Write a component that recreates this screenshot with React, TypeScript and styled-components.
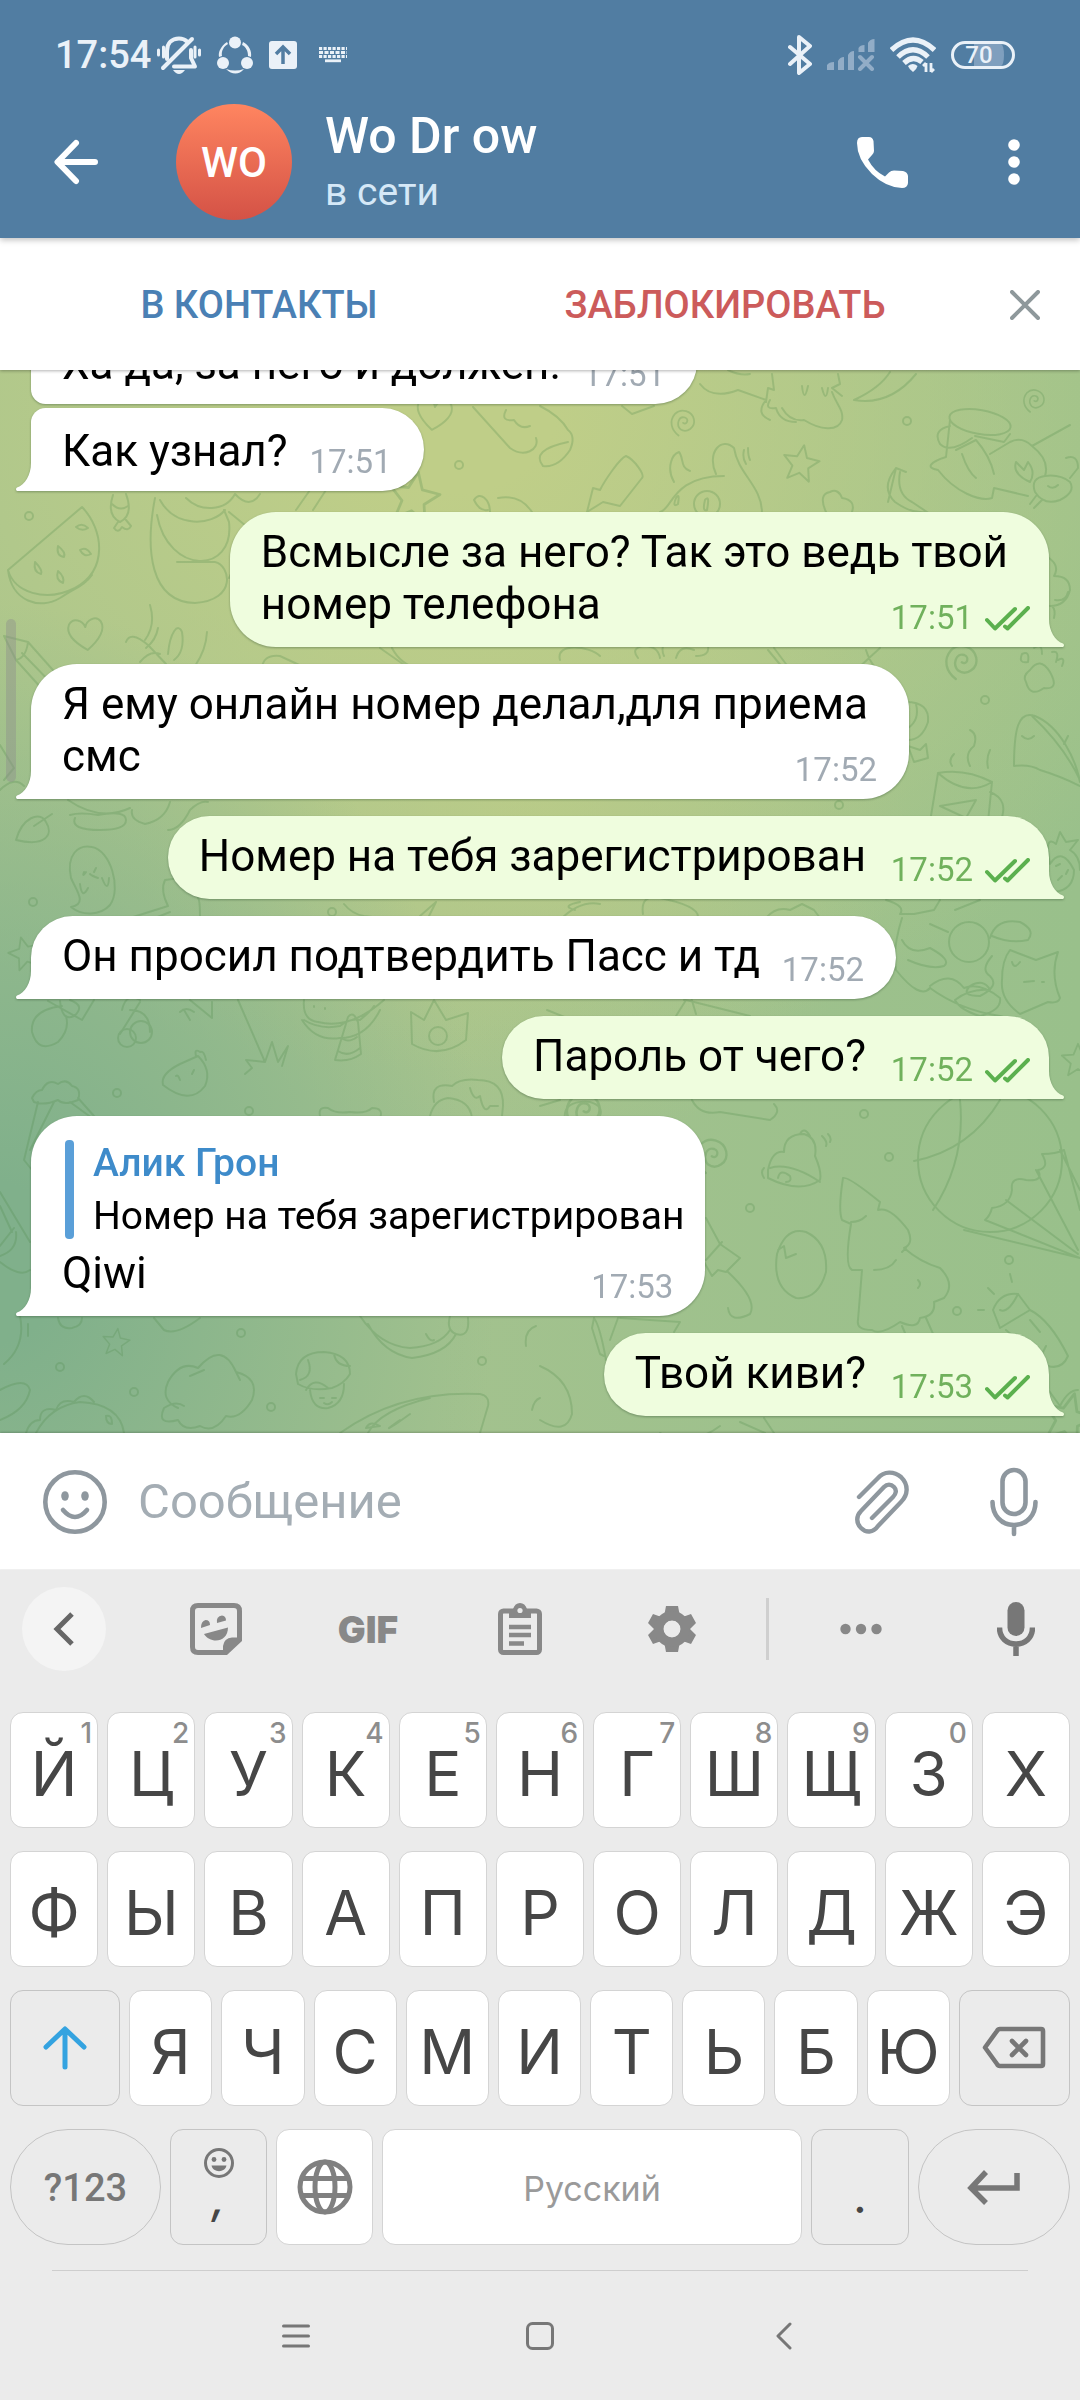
import React from "react";
import styled, { createGlobalStyle, css } from "styled-components";

const GlobalStyle = createGlobalStyle`
  *, *::before, *::after { box-sizing: border-box; }
  body { margin: 0; background: #ebebeb; font-family: Roboto, "Noto Sans", sans-serif; }
  button, input { font: inherit; border: 0; padding: 0; margin: 0; background: none; color: inherit; outline: none; }
  button { cursor: pointer; }
  p { margin: 0; }
  svg { display: block; flex: none; }
`;

const Screen = styled.div`
  display: flex;
  flex-direction: column;
  height: 100vh;
  overflow: hidden;
`;

/* ---------- header ---------- */

const Header = styled.header`
  position: relative;
  z-index: 2;
  background: #517da2;
  color: #fff;
  box-shadow: 0 2px 6px rgba(0, 0, 0, 0.25);
`;

const StatusBar = styled.div`
  display: flex;
  align-items: center;
  justify-content: space-between;
  height: 86px;
  padding: 24px 65px 0 55px;
  color: #eaf1f8;
`;

const StatusGroup = styled.div<{ $gap: number }>`
  display: flex;
  align-items: center;
  gap: ${(p) => p.$gap}px;
`;

const Clock = styled.span`
  font-size: 38px;
  font-weight: 500;
  line-height: 44px;
  margin-right: -10px;
`;

const Battery = styled.span`
  display: flex;
  align-items: center;
  justify-content: center;
  width: 64px;
  height: 28px;
  padding-right: 8px;
  border: 3px solid #eaf1f8;
  border-radius: 14px;
  background: linear-gradient(90deg, transparent 20px, #7f9fbe 20px, #7f9fbe 52px, transparent 52px) content-box;
  font-size: 24px;
  font-weight: 500;
  line-height: 22px;
`;

const ChatHeader = styled.div`
  display: flex;
  align-items: center;
  height: 152px;
`;

const IconButton = styled.button<{ $width: number; $indent?: number }>`
  display: flex;
  flex: none;
  align-items: center;
  justify-content: center;
  align-self: stretch;
  width: ${(p) => p.$width}px;
  padding-left: ${(p) => p.$indent ?? 0}px;
`;

const Avatar = styled.div`
  display: flex;
  flex: none;
  align-items: center;
  justify-content: center;
  width: 116px;
  height: 116px;
  margin: 0 33px 0 24px;
  border-radius: 50%;
  background: linear-gradient(#ff8560, #d45246);
  font-size: 42px;
  font-weight: 500;
`;

const Peer = styled.div`
  flex: 1;
  min-width: 0;
`;

const PeerName = styled.div`
  font-size: 50px;
  font-weight: 500;
  line-height: 60px;
`;

const PeerStatus = styled.div`
  font-size: 39px;
  line-height: 52px;
  color: #d5e8f7;
`;

/* ---------- contact actions ---------- */

const ActionBar = styled.div`
  position: relative;
  z-index: 1;
  display: flex;
  flex: none;
  height: 132px;
  padding: 2px 0 0 26px;
  background: #fff;
  box-shadow: 0 1px 3px rgba(0, 0, 0, 0.3);
`;

const ActionButton = styled.button<{ $danger?: boolean }>`
  flex: 1;
  font-size: 38px;
  font-weight: 500;
  color: ${(p) => (p.$danger ? "#cc5b5b" : "#4a80b4")};
`;

const CloseSlot = styled.div`
  display: flex;
  padding-left: 12px;
`;

/* ---------- chat ---------- */

const Chat = styled.main`
  position: relative;
  display: flex;
  flex: 1;
  flex-direction: column;
  justify-content: flex-end;
  gap: 17px;
  min-height: 0;
  padding: 0 31px 17px;
  overflow: hidden;
  background:
    radial-gradient(ellipse 46% 62% at 0% 84%, #80b08b 12%, rgba(128, 176, 139, 0) 100%),
    radial-gradient(ellipse 78% 62% at 42% 4%, #bfce88 12%, rgba(191, 206, 136, 0) 100%),
    radial-gradient(ellipse 36% 34% at 48% 40%, rgba(184, 202, 136, 0.8), rgba(184, 202, 136, 0) 100%),
    linear-gradient(90deg, #a3c28e 40%, #99c08b);
`;

const Wallpaper = styled.svg`
  position: absolute;
  inset: 0;
  width: 100%;
  height: 100%;
  fill: none;
  stroke: #4f8a4a;
  stroke-width: 2;
  stroke-linecap: round;
  stroke-linejoin: round;
  opacity: 0.25;
`;

const ScrollThumb = styled.div`
  position: absolute;
  left: 6px;
  top: 249px;
  width: 10px;
  height: 163px;
  border-radius: 5px;
  background: rgba(140, 140, 140, 0.4);
`;

const Group = styled.div`
  display: flex;
  flex-direction: column;
  & > div { margin-bottom: 4px; }
`;

type Side = "in" | "out";
type Chain = "none" | "first" | "last";

const radii = (side: Side, chain: Chain) => {
  if (side === "out") return "46px 46px 0 46px";
  if (chain === "first") return "16px 46px 46px 16px";
  if (chain === "last") return "16px 46px 46px 0";
  return "46px 46px 46px 0";
};

const Bubble = styled.div<{ $side: Side; $chain: Chain; $reply: boolean }>`
  position: relative;
  display: grid;
  align-self: ${(p) => (p.$side === "out" ? "flex-end" : "flex-start")};
  padding: ${(p) => (p.$chain === "none" ? "14px" : "17px")} ${(p) => (p.$reply ? 21 : 41)}px
    ${(p) => (p.$chain === "none" ? "17px" : "14px")} 31px;
  border-radius: ${(p) => radii(p.$side, p.$chain)};
  background: ${(p) => (p.$side === "out" ? "#effdde" : "#fff")};
  filter: drop-shadow(0 1px 1px rgba(40, 70, 40, 0.4));
`;

const Tail = styled.svg<{ $side: Side }>`
  position: absolute;
  bottom: 0;
  ${(p) =>
    p.$side === "out"
      ? css`
          right: -15px;
          transform: scaleX(-1);
          fill: #effdde;
        `
      : css`
          left: -15px;
          fill: #fff;
        `}
`;

const MessageText = styled.p<{ $reserve: number }>`
  padding-right: ${(p) => p.$reserve}px;
  font-size: 44px;
  line-height: 52px;
  white-space: nowrap;
  color: #000;
`;

const TextLine = styled.span`
  display: block;
  width: fit-content;
`;

const Meta = styled.span<{ $side: Side }>`
  position: absolute;
  right: ${(p) => (p.$side === "out" ? 19 : 32)}px;
  bottom: 10px;
  display: flex;
  align-items: center;
  gap: 12px;
  font-size: 33px;
  line-height: 38px;
  color: ${(p) => (p.$side === "out" ? "#70b15c" : "#a1aab3")};
`;

const Reply = styled.div`
  display: flex;
  gap: 19px;
  margin: 10px 0 8px 3px;
`;

const ReplyBar = styled.div`
  width: 9px;
  border-radius: 4px;
  background: #5a9fd8;
`;

const ReplyBody = styled.div`
  display: grid;
  gap: 7px;
  font-size: 39px;
  line-height: 46px;
  white-space: nowrap;
`;

const ReplyName = styled.span`
  font-weight: 500;
  color: #3e8bca;
`;

/* ---------- composer ---------- */

const Composer = styled.form`
  position: relative;
  z-index: 1;
  display: flex;
  flex: none;
  align-items: center;
  height: 136px;
  padding-top: 2px;
  background: #fff;
  box-shadow: 0 -1px 2px rgba(0, 0, 0, 0.2);
  color: #8e979e;
`;

const MessageInput = styled.input`
  flex: 1;
  min-width: 0;
  font-size: 49px;
  line-height: 60px;
  color: #000;
  &::placeholder { color: #a4adb4; opacity: 1; }
`;

/* ---------- keyboard ---------- */

const Keyboard = styled.section`
  flex: none;
  background: #ebebeb;
  box-shadow: inset 0 1px 0 #f3f3f3;
`;

const Toolbar = styled.div`
  display: grid;
  grid-template-columns: 140fr repeat(4, 152fr) 38fr 150fr 144fr;
  height: 120px;
  align-items: center;
  justify-items: center;
  color: #888;
  & > :first-child { margin-right: 12px; }
  & > :last-child { margin-left: 16px; }
`;

const ToolButton = styled.button<{ $round?: boolean; $dark?: boolean }>`
  display: flex;
  align-items: center;
  justify-content: center;
  width: 84px;
  height: 84px;
  border-radius: 50%;
  background: ${(p) => (p.$round ? "#f4f4f4" : "none")};
  color: ${(p) => (p.$dark ? "#777" : "#888")};
`;

const GifLabel = styled.span`
  font-family: Inter, Roboto, sans-serif;
  font-size: 37px;
  font-weight: 900;
`;

const ToolDivider = styled.span`
  width: 3px;
  height: 62px;
  background: #cfcfcf;
`;

const Keys = styled.div`
  display: grid;
  gap: 23px;
  padding: 23px 10px 25px;
`;

const KeyRow = styled.div<{ $columns: string }>`
  display: grid;
  grid-template-columns: ${(p) => p.$columns};
  gap: 9px;
`;

const Key = styled.button<{ $variant?: "plain" | "soft" | "pill" }>`
  position: relative;
  display: flex;
  flex-direction: column;
  align-items: center;
  justify-content: center;
  min-width: 0;
  height: 116px;
  border: 1px solid ${(p) => (p.$variant ? "#c4c4c4" : "#d4d4d4")};
  border-radius: ${(p) => (p.$variant === "pill" ? 58 : 13)}px;
  background: ${(p) => (p.$variant ? "#ebebeb" : "#fff")};
  color: #777;
`;

const Letter = styled.span`
  padding-top: 7px;
  font-family: Inter, Roboto, sans-serif;
  font-size: 62px;
  line-height: 76px;
  color: #464646;
`;

const Hint = styled.span`
  position: absolute;
  top: 3px;
  right: 5px;
  font-family: Inter, Roboto, sans-serif;
  font-size: 28px;
  font-weight: 500;
  line-height: 34px;
  color: #8d8d8d;
`;

const SymbolsLabel = styled.span`
  padding-top: 2px;
  font-size: 38px;
  font-weight: 500;
`;

const SpaceLabel = styled.span`
  padding-top: 2px;
  font-family: Inter, Roboto, sans-serif;
  font-size: 34px;
  color: #9a9a9a;
`;

const Punctuation = styled.span<{ $alone?: boolean }>`
  padding: ${(p) => (p.$alone ? "20px 0 0" : "0 0 8px")};
  font-family: Inter, Roboto, sans-serif;
  font-size: 44px;
  font-weight: 500;
  font-style: ${(p) => (p.$alone ? "normal" : "italic")};
  line-height: 40px;
  color: #464646;
`;

const NavBar = styled.nav`
  display: flex;
  justify-content: center;
  height: 130px;
  margin: 0 52px;
  border-top: 1px solid #cecece;
  color: #777;
`;

const NavButton = styled.button`
  display: flex;
  align-items: center;
  justify-content: center;
  width: 25%;
`;

/* ---------- drawings ---------- */

const line = (width: number) => ({
  fill: "none",
  stroke: "currentColor",
  strokeWidth: width,
  strokeLinecap: "round" as const,
  strokeLinejoin: "round" as const,
});

const MutedBell = () => (
  <svg width="44" height="38" viewBox="0 0 44 38">
    <g {...line(4)}>
      <path d="M10 23V15C10 7 15 2.500 22 2.500C25 2.500 28 3.500 30 5.500" />
      <path d="M34 14V22L38 30.500H17" />
      <path d="M35 3L6 32" />
    </g>
    <g {...line(3)}>
      <path d="M1.500 14V19M6.500 11V21M38 11V21M42.500 14V19" />
    </g>
    <path d="M16 34H28Q25 38 22 38Q19 38 16 34Z" fill="currentColor" />
  </svg>
);

const ShareCircle = () => (
  <svg width="36" height="38" viewBox="0 0 36 38">
    <g fill="currentColor">
      <circle cx="18" cy="6.500" r="6" />
      <circle cx="6" cy="27" r="6" />
      <circle cx="30" cy="27" r="6" />
      <path d="M10 6C4 10 1 16 2 21L5 20C4 15 7 10 11 8Z" />
      <path d="M26 6C32 9 35 15 34 21L31 20C31 15 29 11 25 9Z" />
      <path d="M9 33C15 39 22 39 27 33C21 35 15 35 9 33Z" />
    </g>
  </svg>
);

const UploadBox = () => (
  <svg width="28" height="28" viewBox="0 0 28 28">
    <rect width="28" height="28" rx="3" fill="currentColor" />
    <path d="M14 23V7M7 13L14 6L21 13" fill="none" stroke="#517da2" strokeWidth="3.500" />
  </svg>
);

const KeyboardGlyph = () => (
  <svg width="40" height="16" viewBox="0 0 40 16">
    <g stroke="currentColor" strokeWidth="2.800">
      <path d="M6 1.500H34" strokeDasharray="3.200 1.300" />
      <path d="M6 5.500H34" strokeDasharray="4 1.500" />
      <path d="M6 9.500H34" strokeDasharray="3.200 1.300" />
      <path d="M12 13.800H28" />
    </g>
  </svg>
);

const Bluetooth = () => (
  <svg width="24" height="40" viewBox="0 0 24 40">
    <path d="M2 12L22 29L11 38V2L22 11L2 29" {...line(4)} />
  </svg>
);

const NoSignal = () => (
  <svg width="48" height="32" viewBox="0 0 48 32" fill="#92adc7">
    <path d="M0 31V26Q2 23 7 23V31ZM11 31V22Q13 18 17 18V31ZM21 31V16Q23 12 27 12V31ZM31.500 13V9Q33 6 37.500 6V13ZM41 13V4Q43 0 47.500 0V13Z" />
    <path d="M33 18L45 30M45 18L33 30" stroke="#92adc7" strokeWidth="4" strokeLinecap="round" />
  </svg>
);

const Wifi = () => (
  <svg width="46" height="36" viewBox="0 0 46 36">
    <g {...line(5.2)} strokeLinecap="butt">
      <path d="M1.500 13Q23 -7 44.500 13" />
      <path d="M8 20Q23 5.500 38 20" />
      <path d="M14 26Q23 17.500 32 25" />
    </g>
    <path d="M18 29Q23 25 27.500 29Q27 32 23 35Q19 32 18 29Z" fill="currentColor" />
    <path d="M36 26V35M33 29L36 26M41 26V35M41 35L44 32" stroke="currentColor" strokeWidth="2.800" fill="none" />
  </svg>
);

const BackArrow = () => (
  <svg width="44" height="46" viewBox="0 0 44 46">
    <path d="M41 23H4M22 4L3.500 23L22 42" {...line(6)} />
  </svg>
);

const Phone = () => (
  <svg width="51" height="51" viewBox="0 0 51 51" fill="#fff">
    <path d="M5 0H12Q15.500 0 16.500 4L17 14Q17 16 15 18L11 22.500Q17 34 28 39.500L32 35.500Q34 33.500 37 33.500L46 34Q50.500 35 51 39V46Q50.500 51 45 51Q29 50.500 15 37Q0 22 0 6Q0 0 5 0Z" />
  </svg>
);

const MoreVertical = () => (
  <svg width="12" height="46" viewBox="0 0 12 46" fill="#fff">
    <circle cx="6" cy="6" r="5.800" />
    <circle cx="6" cy="23" r="5.800" />
    <circle cx="6" cy="40" r="5.800" />
  </svg>
);

const Cross = () => (
  <svg width="30" height="30" viewBox="0 0 30 30" color="#8e989b">
    <path d="M2 2L28 28M28 2L2 28" {...line(4)} />
  </svg>
);

const Ticks = () => (
  <svg width="45" height="25" viewBox="0 0 45 25">
    <path d="M2 14L10 22.500L30 3M20 20.500L22.500 22.500L43 2" fill="none" stroke="#5bb04e" strokeWidth="4" strokeLinecap="round" strokeLinejoin="round" />
  </svg>
);

const Smiley = () => (
  <svg width="64" height="64" viewBox="0 0 64 64">
    <circle cx="32" cy="32" r="29.700" {...line(4.6)} />
    <path d="M20 40Q32 54 44 40" {...line(4.6)} />
    <ellipse cx="22" cy="26" rx="3.800" ry="4.800" fill="currentColor" />
    <ellipse cx="42" cy="26" rx="3.800" ry="4.800" fill="currentColor" />
  </svg>
);

const Paperclip = () => (
  <svg width="55" height="64" viewBox="0 0 55 64">
    <path d="M4 27L23 8C29 1 39 1 46 7C54 15 53 25 46 32L23 56C18 63 11 63 6 58C1 53 1 46 6 41L29 17C32 14 36 14 39 17C42 20 41 24 38 27L17 48" {...line(4.4)} />
  </svg>
);

const MicOutline = () => (
  <svg width="48" height="70" viewBox="0 0 48 70">
    <rect x="12.500" y="3" width="23" height="44" rx="11.500" {...line(4.6)} />
    <path d="M2.500 35C2.500 48 11 58 24 58C37 58 45.500 48 45.500 35M24 58V67" {...line(4.6)} />
  </svg>
);

const ChevronLeft = () => (
  <svg width="22" height="34" viewBox="0 0 22 34">
    <path d="M19 2L4 17L19 32" fill="none" stroke="#666" strokeWidth="5" />
  </svg>
);

const Sticker = () => (
  <svg width="52" height="52" viewBox="0 0 52 52">
    <path d="M8 2.500H44Q49.500 2.500 49.500 8V37L36 49.500H8Q2.500 49.500 2.500 44V8Q2.500 2.500 8 2.500Z" fill="none" stroke="currentColor" strokeWidth="5" />
    <g fill="currentColor">
      <path d="M33 50V43Q34 35 42 34.500H50V38L37 51Z" />
      <path d="M14 31L38 24.500C38 40 20 41 14 31Z" />
      <path d="M11 25Q11 18 15.500 17Q20 17 20 22Z" />
      <path d="M27 20Q26 13 32 12.500Q36 13 36 17.500Z" />
    </g>
  </svg>
);

const Clipboard = () => (
  <svg width="44" height="52" viewBox="0 0 44 52">
    <rect x="2.500" y="8" width="39" height="41.500" rx="3" fill="none" stroke="currentColor" strokeWidth="5" />
    <path d="M11 15V6H15Q17 0 22 0Q27 0 29 6H33V15Z" fill="currentColor" />
    <circle cx="22" cy="7.500" r="2.600" fill="#ebebeb" />
    <path d="M11 24H33M11 32H33M11 40.500H26" stroke="currentColor" strokeWidth="4.600" />
  </svg>
);

const Gear = () => (
  <svg width="54" height="54" viewBox="0 0 54 54">
    <path
      d="M21 4H33L34.500 12L39 14.500L46 12L51 21L45 27L51 33L46 42L39 39.500L34.500 42L33 50H21L19.500 42L15 39.500L8 42L3 33L9 27L3 21L8 12L15 14.500L19.500 12ZM27 18.500A8.500 8.500 0 1 0 27 35.500A8.500 8.500 0 1 0 27 18.500Z"
      fill="currentColor"
      fillRule="evenodd"
    />
    <circle cx="27" cy="27" r="13.500" fill="none" stroke="currentColor" strokeWidth="9" />
  </svg>
);

const MoreHorizontal = () => (
  <svg width="42" height="12" viewBox="0 0 42 12" fill="currentColor">
    <circle cx="5.500" cy="6" r="5.200" />
    <circle cx="21" cy="6" r="5.200" />
    <circle cx="36.500" cy="6" r="5.200" />
  </svg>
);

const MicSolid = () => (
  <svg width="38" height="54" viewBox="0 0 38 54">
    <rect x="10.500" y="0" width="17" height="34" rx="8.500" fill="currentColor" />
    <path d="M2.500 25.500C2.500 36 10 42 19 42C28 42 35.500 36 35.500 25.500M19 42V54" fill="none" stroke="currentColor" strokeWidth="5.500" />
  </svg>
);

const ShiftArrow = () => (
  <svg width="44" height="44" viewBox="0 0 44 44" color="#34a3e0">
    <path d="M22 41V4M3 21L22 3L41 21" {...line(5)} />
  </svg>
);

const Backspace = () => (
  <svg width="64" height="44" viewBox="0 0 64 44">
    <path d="M18 3H59Q61 3 61 5V38Q61 40 59 40H18Q16 40 15 38L3 21.500L15 5Q16 3 18 3ZM30 15L44 29M44 15L30 29" {...line(4.6)} />
  </svg>
);

const TinySmiley = () => (
  <svg width="30" height="30" viewBox="0 0 30 30">
    <circle cx="15" cy="15" r="13.500" {...line(3)} />
    <circle cx="10" cy="11.500" r="2.400" fill="currentColor" />
    <circle cx="20" cy="11.500" r="2.400" fill="currentColor" />
    <path d="M7.500 17.500H22.500C21 25 9 25 7.500 17.500Z" fill="currentColor" />
  </svg>
);

const Globe = () => (
  <svg width="56" height="56" viewBox="0 0 56 56" fill="none" stroke="#808080" strokeWidth="5">
    <circle cx="28" cy="28" r="25" />
    <ellipse cx="28" cy="28" rx="10" ry="25" />
    <path d="M5 19.500H51M5 36.500H51" />
  </svg>
);

const EnterArrow = () => (
  <svg width="54" height="36" viewBox="0 0 54 36">
    <path d="M50 4V19H5M19 3L4 19L19 34" fill="none" stroke="currentColor" strokeWidth="5.500" />
  </svg>
);

const Heart = ({ x, y, r = 0 }: { x: number; y: number; r?: number }) => (
  <path transform={`translate(${x} ${y}) rotate(${r})`} d="M0 16C-14 6 -20 -3 -16 -11C-11 -18 -2 -14 0 -7C2 -14 12 -18 16 -11C20 -3 13 7 0 16Z" />
);

const Star = ({ x, y, s = 1, r = 0 }: { x: number; y: number; s?: number; r?: number }) => (
  <path transform={`translate(${x} ${y}) rotate(${r}) scale(${s})`} d="M0 -18L5 -6L18 -5L8 4L11 17L0 10L-11 17L-8 4L-18 -5L-5 -6Z" />
);

const Spiral = ({ x, y, s = 1 }: { x: number; y: number; s?: number }) => (
  <path transform={`translate(${x} ${y}) scale(${s})`} d="M-1 1C3 4 6 -3 1 -5C-6 -7 -9 3 -4 8C3 13 13 6 11 -3C9 -12 -3 -16 -10 -9C-17 -1 -14 9 -6 15" />
);

const dots = [
  [459, 95], [29, 146], [907, 51], [985, 330], [839, 435], [33, 532], [117, 723], [249, 741], [332, 542], [241, 963],
  [60, 997], [134, 1022], [271, 1037], [482, 991], [864, 744], [889, 787], [750, 838], [1009, 890], [957, 941],
];

const Doodles = () => (
  <Wallpaper viewBox="0 0 1080 1063" preserveAspectRatio="xMidYMid slice" aria-hidden="true">
    {dots.map(([x, y]) => (
      <circle key={`${x}-${y}`} cx={x} cy={y} r="4" />
    ))}
    <Heart x={434} y={44} r={8} />
    <Heart x={86} y={264} r={-6} />
    <Star x={414} y={127} s={1.4} r={10} />
    <Star x={801} y={93} r={10} />
    <Star x={25} y={583} s={0.9} r={-15} />
    <Star x={116} y={972} s={0.75} r={8} />
    <Star x={1078} y={690} s={0.9} />
    <Star x={1068} y={1048} s={1.4} r={15} />
    <Spiral x={684} y={52} s={0.9} />
    <Spiral x={1035} y={30} s={0.8} />
    <Spiral x={963} y={291} s={1.2} />
    <Spiral x={713} y={785} s={1.2} />
    <Spiral x={585} y={740} s={1.3} />
    {/* watermelon and sweets */}
    <path d="M8 200L82 137C104 160 108 200 75 218C45 233 14 222 8 200C12 232 40 240 60 228C75 218 85 215 92 205" />
    <path d="M76 157Q82 152 88 158Q82 162 76 157ZM58 176Q66 182 64 187Q56 186 58 176ZM80 180Q86 176 91 184Q84 188 80 180ZM35 192Q43 200 41 204Q33 202 35 192ZM58 201Q65 207 63 213Q55 210 58 201Z" />
    <path d="M113 125C108 140 112 148 120 152C128 148 132 140 126 124M112 134Q120 142 128 136M118 152L114 158Q118 164 122 157Q128 162 131 156L126 150" />
    <path d="M335 690L348 647Q353 640 358 652L361 684Q350 692 335 690ZM338 681Q348 688 360 678M343 669Q349 673 357 667" />
    {/* curled cat */}
    <path d="M155 128C145 180 150 232 195 233C238 230 230 195 215 192H177M157 145C168 205 235 205 229 152L224 140M160 130C175 158 212 156 225 140M186 128C200 142 225 142 235 124Q250 140 260 124M229 142L246 156M229 208L232 202" />
    <path d="M296 140L310 120M313 140L326 120M150 235Q156 255 145 270M158 258Q156 270 146 278M207 262Q206 280 195 296" />
    {/* pencil */}
    <path d="M4 266L16 290L52 330M4 266L28 272L60 308M16 290Q26 288 28 272M22 283L58 320M126 272Q130 260 148 275L166 294M168 284C170 262 178 252 182 262C184 275 182 284 174 290M140 292Q150 280 160 284" />
    {/* bird and branches */}
    <path d="M473 37L510 78C524 88 540 80 536 68M506 40Q500 52 514 50Q520 60 530 56M474 130C480 120 490 130 490 142M474 130Q480 142 488 140M498 128Q520 124 532 142" />
    <path d="M540 36Q560 46 568 60Q576 66 570 80Q558 98 543 96Q530 80 568 72M622 36L632 44L654 36" />
    <path d="M587 142L593 118L600 120C605 110 620 88 626 86C635 90 645 105 642 108L620 136L603 132Z" />
    <path d="M660 142C672 140 672 106 724 106M674 112C666 98 672 84 679 82C684 88 680 98 690 101M716 104C706 82 722 66 734 78C738 104 762 116 762 143M744 80Q742 88 746 94M748 78Q748 86 750 90" />
    <circle cx="707" cy="134" r="13" />
    <path d="M705 130Q710 124 707 140Q702 142 705 130ZM676 128Q680 122 678 134Q672 138 676 128Z" />
    {/* dragon head */}
    <path d="M700 14Q712 30 738 20L766 30Q755 44 770 50M728 0Q740 6 750 4M766 32L768 18L774 20L772 4M838 4L840 14L832 18L842 26M770 30Q764 40 776 38Q780 52 796 52M782 38Q790 52 804 50C820 60 838 62 842 50C844 40 836 34 832 22M802 16Q804 34 808 16M822 18Q826 34 828 18M854 30Q880 18 890 2M854 30Q890 36 916 4" />
    <path d="M888 132L896 98L906 102M896 98Q880 118 895 132Q912 144 926 142M900 102Q896 124 912 132L930 144M826 142Q818 124 830 122Q838 118 842 128Q856 130 852 142" />
    {/* sleeping reptile */}
    <ellipse cx="980" cy="52" rx="31" ry="12" transform="rotate(10 980 52)" />
    <path d="M950 50L946 87M1010 64L1004 72L975 66M946 87C930 92 925 98 938 100C955 122 980 132 992 128L994 118L1028 126M956 80L976 70Q990 86 994 104M990 84L1010 72Q1022 66 1032 76M1032 76L1070 55M1032 76Q1050 90 1045 106M962 84Q968 102 976 108M950 56Q932 60 940 74Q950 84 972 68" />
    <path d="M1035 122Q1030 108 1045 106Q1060 104 1070 112Q1076 122 1060 130Q1044 136 1035 122ZM1030 112Q1012 104 1016 92L1024 100L1028 92Q1036 102 1030 112ZM1066 88Q1078 84 1078 98L1070 108M1048 116Q1053 120 1058 115M1036 126L1030 134M1042 130L1034 138" />
    {/* clouds, paw, mug, dolphin */}
    <path d="M1049 188Q1060 196 1054 206Q1070 206 1070 220Q1066 236 1050 236M1055 230Q1066 232 1068 222M1052 236Q1056 240 1054 248" />
    <path d="M1030 300Q1040 286 1050 302Q1060 320 1044 318Q1030 328 1026 312Q1022 306 1030 300ZM1022 284Q1030 280 1028 292Q1018 294 1022 284ZM1052 282Q1060 280 1056 292M1058 290Q1066 286 1062 296M1034 278Q1042 272 1042 284" />
    <path d="M938 403L930 452M992 412L988 452M938 403Q965 398 992 412Q966 428 938 403ZM990 422Q1010 430 1000 452M940 436L976 430L966 448ZM970 396Q964 384 974 376Q978 364 970 360M988 398Q986 388 990 380M952 396Q948 390 954 384" />
    <path d="M1014 396C1014 360 1018 340 1035 346C1060 356 1076 390 1080 412M1014 396Q1030 394 1040 400Q1060 406 1080 416M1032 346Q1064 376 1080 410M1022 366Q1028 372 1034 366M1064 374L1068 366" />
    <path d="M906 332Q930 332 928 352Q922 370 908 370M916 334Q920 350 908 358M908 376L920 380L926 374L928 388L914 392Z" />
    <path d="M560 290C555 272 590 276 600 286M638 288Q630 278 644 276Q658 276 660 288M664 286Q658 272 676 268M676 288Q680 274 694 280M696 286Q710 286 708 276M768 280L788 304M774 278L792 302M856 300L880 278M866 280Q872 300 888 306M262 300Q262 284 280 286L310 300M380 278L420 306M392 278Q400 294 420 300" />
    {/* left column */}
    <path d="M0 375L14 398L4 410M0 420Q14 406 24 416M16 470C22 448 40 440 46 452C54 465 45 477 16 470ZM34 456L52 444M70 445Q80 442 98 445Q126 440 126 450Q126 460 100 460Q70 460 75 448M132 440Q130 450 145 454Q165 450 170 432M68 430Q100 452 130 438M168 460Q180 460 190 440Q200 430 208 432" />
    <path d="M71 508C66 485 78 474 92 477C110 480 122 518 110 535C100 546 82 546 71 537C88 534 76 520 71 508ZM84 502Q82 508 86 502M98 508Q92 506 90 504M96 498L94 502M80 514Q82 530 88 518M102 508Q108 524 109 508" />
    <path d="M130 548L168 536Q160 520 165 510L180 508M200 548Q200 530 198 528M135 556L170 542" />
    <path d="M48 631L82 650L94 630M60 631Q62 652 74 646Q86 636 70 630M62 636Q30 640 32 662Q38 684 58 672Q70 660 66 646M122 640Q126 622 140 630M140 632L120 664M130 640Q150 640 150 662" />
    <circle cx="127" cy="668" r="9" />
    <circle cx="141" cy="662" r="11" />
    <path d="M184 640L190 650M180 642Q186 636 194 642M190 630L212 648L212 632M238 630L265 692L246 690L252 698L245 704M265 692L272 672L278 692L288 676L282 696" />
    <path d="M304 630Q302 650 318 652Q350 660 384 630M304 650Q320 660 340 656Q350 648 360 650Q372 640 374 636M302 650Q316 672 340 668Q366 668 380 640M314 636V637M325 638V639" />
    <path d="M411 642L424 650L434 630L446 650L468 643L466 670Q440 690 412 674Z" />
    <circle cx="438" cy="666" r="9" />
    <path d="M163 715Q160 704 180 694L198 686Q212 700 205 716Q190 736 163 715ZM196 686Q194 678 200 682Q204 680 206 690M180 710Q178 704 176 706M194 700L192 704" />
    <path d="M32 728Q36 720 42 720Q48 708 58 714Q66 708 72 716Q82 718 78 730Q64 736 58 730Q44 736 34 732ZM38 732L24 790M54 732L30 780M70 732L92 748M78 728L94 746M24 790L32 800" />
    <path d="M320 746Q318 736 328 738Q335 744 350 742Q366 744 372 738Q384 738 380 748M430 746Q434 730 448 728Q470 730 472 748M434 732Q430 712 452 716Q460 708 478 710Q504 710 503 736L502 746M470 718Q474 732 480 726Q484 746 490 736L498 736" />
    <path d="M0 822L30 872M0 886Q18 880 16 862M0 876L14 858M0 892Q20 908 30 900M0 836L12 862M20 946Q26 976 4 994M28 954V966M58 948Q60 960 72 958Q82 956 82 948M154 948L164 960Q176 966 200 948" />
    {/* bottom row */}
    <path d="M0 1020Q26 1006 30 1020Q26 1040 0 1050M26 1063Q30 1050 40 1050Q40 1036 56 1040Q60 1028 74 1032Q84 1020 94 1032M36 1063Q50 1036 80 1032Q120 1034 124 1063M106 1046Q112 1044 112 1054Q106 1054 106 1046" />
    <path d="M178 1038Q160 1030 168 1012Q180 990 198 998Q222 970 236 1002Q260 1008 252 1030Q240 1050 226 1046Q214 1064 200 1056Q184 1062 178 1050Q156 1056 164 1038Q176 1030 184 1036M190 1006L204 1000M236 1002L240 1010" />
    <path d="M296 1004Q298 982 324 982Q350 984 350 1004Q344 1014 332 1018Q312 1022 298 1014ZM308 990Q314 1006 300 1010M334 984Q336 996 350 996M306 1020Q314 1006 328 1018M310 1020Q312 1040 328 1038Q344 1034 344 1014M320 1028H324M332 1028H336M324 1033Q328 1036 332 1032" />
    <path d="M360 946Q380 976 410 978Q440 976 450 960M368 954Q384 984 412 988Q446 984 456 964Q470 968 468 948M450 946Q446 960 456 964M426 964Q430 972 434 970" />
    <path d="M340 1063Q400 1020 480 1024Q490 1026 488 1036L480 1063M368 1063Q380 1040 430 1028M400 1050Q380 1064 396 1054L410 1044M366 1058Q370 1050 380 1056ZM526 976Q524 960 536 956M532 1040Q534 1030 540 1028" />
    <path d="M594 948Q600 956 606 990M594 948L592 958L600 984L604 986M610 970L618 948M620 948L680 952L674 962M540 996Q572 1010 572 1044Q566 1066 540 1050M660 1063Q690 1078 720 1056M740 1052L765 1063M764 1048L774 1063" />
    {/* right column */}
    <path d="M1050 494Q1044 464 1056 474L1060 462L1066 472L1078 470L1070 480Q1080 486 1080 500M1050 494Q1062 476 1074 500Q1074 520 1054 522M1056 496L1060 494M1058 510L1062 506M1066 504L1068 500" />
    <path d="M886 530Q906 536 900 544L914 544L934 540L940 530M955 540L980 530M902 570Q910 586 930 578Q952 590 944 596Q930 600 908 590M902 548Q892 580 896 600Q920 630 930 618M930 554L948 562M990 568Q996 548 1020 552Q1036 560 1028 570Q1010 574 992 566" />
    <circle cx="969" cy="572" r="20" />
    <path d="M1010 580L1036 590L1058 582Q1050 604 1060 628Q1058 634 1048 632L1020 644Q1000 630 1002 610Q1002 590 1010 580ZM1012 592Q1014 600 1020 592M1024 612L1034 611M1042 612H1044M930 616Q950 600 964 618Q980 612 1000 628Q1002 640 980 646Q960 640 955 630Q970 618 990 620Q984 608 970 616Q960 626 980 626Q1000 616 990 606Q980 600 992 586M930 618Q960 640 1000 646L1020 652" />
    <path d="M575 540Q560 536 580 532M643 544Q640 524 660 528M660 528Q700 536 698 548M560 550Q580 530 600 534M766 548Q776 536 790 540L802 534L814 540L820 548M344 534Q352 544 364 546L380 548M420 546L436 532L428 548M547 640L572 650M684 630L690 624L696 644M676 646L686 630L750 646" />
    <path d="M768 800Q772 780 784 782Q784 764 804 764Q818 768 815 786Q822 802 820 810Q800 824 768 808ZM800 764Q804 756 810 766M770 798Q790 792 820 812M778 808Q780 798 790 806Q792 812 786 812M822 766Q828 772 826 776M828 764Q832 768 830 772M764 798Q760 802 764 808" />
    <circle cx="990" cy="790" r="72" />
    <path d="M960 730Q966 790 933 840M1000 730Q970 780 914 791M1064 780Q1056 784 1042 784Q1050 798 1038 800Q1044 812 1026 810Q1010 806 1012 820Q1010 836 992 838Q990 846 985 850M1064 780L1080 840M1036 800L1078 880M1006 830L1078 884M985 850L1080 888M1060 780L1080 820M964 860L1080 888" />
    <path d="M843 808Q848 806 880 832L878 840Q890 836 908 860Q914 874 904 878Q920 892 940 898Q956 914 944 928L934 932Q936 946 920 948Q918 960 900 952Q880 966 872 960Q856 960 858 950L862 900H852Q844 896 851 854L842 850Q838 840 843 808ZM851 852Q860 852 866 846M874 900Q890 900 896 890M902 882L906 878M918 910Q922 914 918 918M902 956L908 970M926 948L934 966" />
    <path d="M777 884Q786 856 806 862Q828 872 826 902Q818 930 796 928Q772 918 777 884ZM778 880L784 876L786 888L796 884" />
    <path d="M706 848L720 874L740 888L726 902L718 900L712 906L704 892M728 902Q758 930 750 944Q730 954 728 938M722 872L706 890M692 730Q700 746 720 742L770 750Q782 742 774 734M540 736L560 730M565 750Q562 730 590 732Q604 736 600 746" />
    <path d="M993 940Q1000 922 1018 924L1030 940L1000 958ZM1030 940Q1050 950 1068 986Q1062 1000 1048 996L1006 960M1018 924Q1008 944 1000 940M1030 950L1040 962M1046 976L1040 988M978 940H984M988 918L994 924M1010 904L1012 912M1034 1000L1060 1036Q1068 1020 1078 1020" />
  </Wallpaper>
);

/* ---------- content ---------- */

interface MessageProps {
  lines: string[];
  time: string;
  side?: Side;
  chain?: Chain;
  reply?: { name: string; text: string };
}

const Message = ({ lines, time, side = "in", chain = "none", reply }: MessageProps) => {
  const single = lines.length === 1 && !reply;
  const reserve = single ? (side === "out" ? 142 : 95) : 0;
  return (
    <Bubble $side={side} $chain={chain} $reply={Boolean(reply)}>
      {reply && (
        <Reply>
          <ReplyBar />
          <ReplyBody>
            <ReplyName>{reply.name}</ReplyName>
            <span>{reply.text}</span>
          </ReplyBody>
        </Reply>
      )}
      <MessageText $reserve={reserve}>
        {lines.map((text) => (
          <TextLine key={text}>{text}</TextLine>
        ))}
      </MessageText>
      <Meta $side={side}>
        <time>{time}</time>
        {side === "out" && <Ticks />}
      </Meta>
      {chain !== "first" && (
        <Tail $side={side} width="16" height="28" viewBox="0 0 16 28" aria-hidden="true">
          <path d="M15 0C15 12 9 22 1 24.500Q-1 26 1 28H16V0Z" />
        </Tail>
      )}
    </Bubble>
  );
};

const rowOne = [..."ЙЦУКЕНГШЩЗХ"];
const rowTwo = [..."ФЫВАПРОЛДЖЭ"];
const rowThree = [..."ЯЧСМИТЬБЮ"];
const hints = "1234567890";

export default function App() {
  return (
    <>
      <GlobalStyle />
      <Screen>
        <Header>
          <StatusBar>
            <StatusGroup $gap={16}>
              <Clock>17:54</Clock>
              <MutedBell />
              <ShareCircle />
              <UploadBox />
              <KeyboardGlyph />
            </StatusGroup>
            <StatusGroup $gap={15}>
              <Bluetooth />
              <NoSignal />
              <Wifi />
              <Battery>70</Battery>
            </StatusGroup>
          </StatusBar>
          <ChatHeader>
            <IconButton $width={152} aria-label="Назад"><BackArrow /></IconButton>
            <Avatar>WO</Avatar>
            <Peer>
              <PeerName>Wo Dr ow</PeerName>
              <PeerStatus>в сети</PeerStatus>
            </Peer>
            <IconButton $width={132} aria-label="Позвонить"><Phone /></IconButton>
            <IconButton $width={132} aria-label="Меню"><MoreVertical /></IconButton>
          </ChatHeader>
        </Header>

        <ActionBar>
          <ActionButton>В КОНТАКТЫ</ActionButton>
          <ActionButton $danger>ЗАБЛОКИРОВАТЬ</ActionButton>
          <CloseSlot>
            <IconButton $width={110} aria-label="Закрыть"><Cross /></IconButton>
          </CloseSlot>
        </ActionBar>

        <Chat>
          <Doodles />
          <Group>
            <Message chain="first" lines={["Ха да, за него и должен."]} time="17:51" />
            <Message chain="last" lines={["Как узнал?"]} time="17:51" />
          </Group>
          <Message side="out" lines={["Всмысле за него? Так это ведь твой", "номер телефона"]} time="17:51" />
          <Message lines={["Я ему онлайн номер делал,для приема", "смс"]} time="17:52" />
          <Message side="out" lines={["Номер на тебя зарегистрирован"]} time="17:52" />
          <Message lines={["Он просил подтвердить Пасс и тд"]} time="17:52" />
          <Message side="out" lines={["Пароль от чего?"]} time="17:52" />
          <Message reply={{ name: "Алик Грон", text: "Номер на тебя зарегистрирован" }} lines={["Qiwi"]} time="17:53" />
          <Message side="out" lines={["Твой киви?"]} time="17:53" />
          <ScrollThumb />
        </Chat>

        <Composer onSubmit={(e) => e.preventDefault()}>
          <IconButton type="button" $width={138} $indent={12} aria-label="Эмодзи"><Smiley /></IconButton>
          <MessageInput type="text" placeholder="Сообщение" aria-label="Сообщение" />
          <IconButton type="button" $width={132} aria-label="Прикрепить"><Paperclip /></IconButton>
          <IconButton type="button" $width={132} aria-label="Голосовое сообщение"><MicOutline /></IconButton>
        </Composer>

        <Keyboard>
          <Toolbar>
            <ToolButton $round aria-label="Свернуть"><ChevronLeft /></ToolButton>
            <ToolButton aria-label="Стикеры"><Sticker /></ToolButton>
            <ToolButton><GifLabel>GIF</GifLabel></ToolButton>
            <ToolButton aria-label="Буфер обмена"><Clipboard /></ToolButton>
            <ToolButton aria-label="Настройки"><Gear /></ToolButton>
            <ToolDivider />
            <ToolButton aria-label="Ещё"><MoreHorizontal /></ToolButton>
            <ToolButton $dark aria-label="Голосовой ввод"><MicSolid /></ToolButton>
          </Toolbar>
          <Keys>
            <KeyRow $columns="repeat(11, 1fr)">
              {rowOne.map((letter, i) => (
                <Key key={letter}>
                  <Letter>{letter}</Letter>
                  {hints[i] && <Hint>{hints[i]}</Hint>}
                </Key>
              ))}
            </KeyRow>
            <KeyRow $columns="repeat(11, 1fr)">
              {rowTwo.map((letter) => (
                <Key key={letter}><Letter>{letter}</Letter></Key>
              ))}
            </KeyRow>
            <KeyRow $columns="110fr repeat(9, 83fr) 111fr">
              <Key $variant="soft" aria-label="Верхний регистр"><ShiftArrow /></Key>
              {rowThree.map((letter) => (
                <Key key={letter}><Letter>{letter}</Letter></Key>
              ))}
              <Key $variant="soft" aria-label="Удалить"><Backspace /></Key>
            </KeyRow>
            <KeyRow $columns="151fr 97fr 97fr 420fr 98fr 152fr">
              <Key $variant="pill"><SymbolsLabel>?123</SymbolsLabel></Key>
              <Key $variant="soft"><TinySmiley /><Punctuation>,</Punctuation></Key>
              <Key aria-label="Сменить язык"><Globe /></Key>
              <Key><SpaceLabel>Русский</SpaceLabel></Key>
              <Key $variant="soft"><Punctuation $alone>.</Punctuation></Key>
              <Key $variant="pill" aria-label="Ввод"><EnterArrow /></Key>
            </KeyRow>
          </Keys>
          <NavBar>
            <NavButton aria-label="Недавние">
              <svg width="28" height="24" viewBox="0 0 28 24"><path d="M1.500 2H26.500M1.500 12H26.500M1.500 22H26.500" {...line(3)} /></svg>
            </NavButton>
            <NavButton aria-label="Домой">
              <svg width="28" height="28" viewBox="0 0 28 28"><rect x="1.500" y="1.500" width="25" height="25" rx="5" {...line(3)} /></svg>
            </NavButton>
            <NavButton aria-label="Назад">
              <svg width="16" height="28" viewBox="0 0 16 28"><path d="M14 2L2 14L14 26" {...line(3)} /></svg>
            </NavButton>
          </NavBar>
        </Keyboard>
      </Screen>
    </>
  );
}
